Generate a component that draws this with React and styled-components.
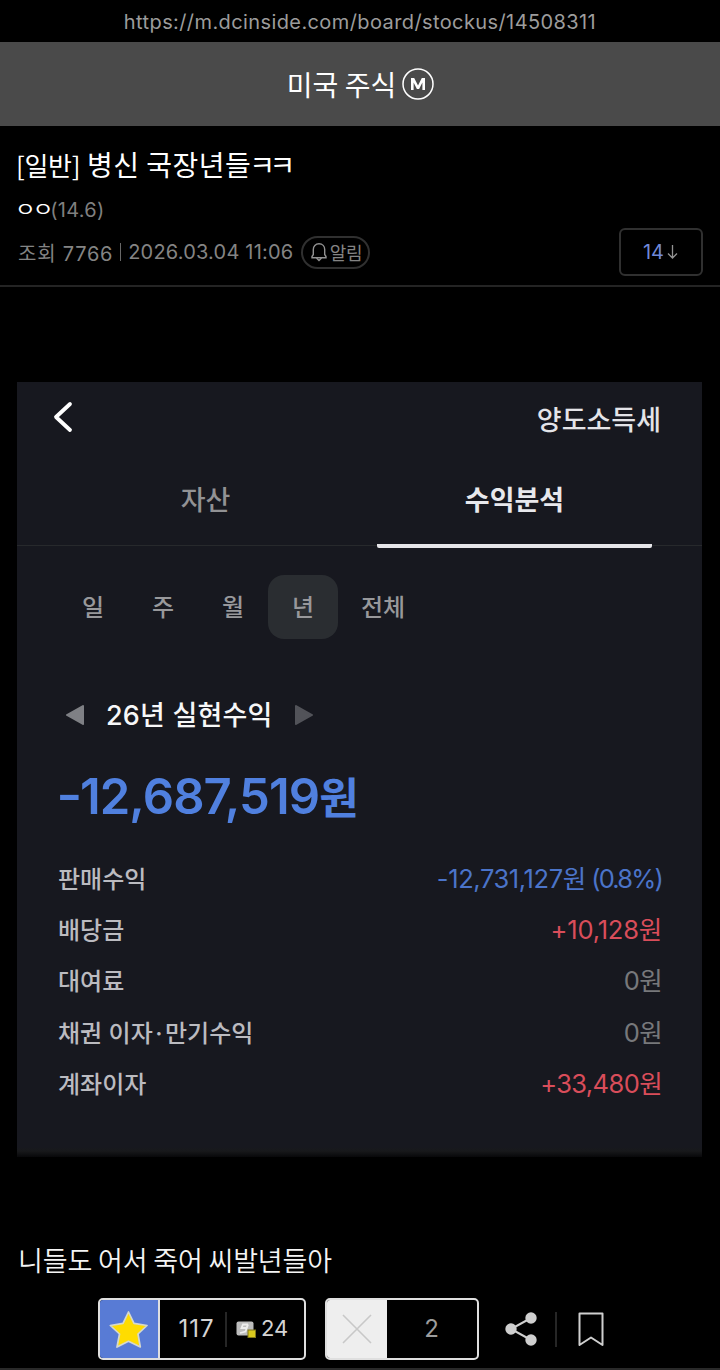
import styled, { createGlobalStyle } from 'styled-components'

const GlobalStyle = createGlobalStyle`
  * {
    box-sizing: border-box;
  }
  body {
    margin: 0;
    background: #000000;
    font-family: Inter, 'Noto Sans CJK KR', sans-serif;
  }
`

const PageStyled = styled.div`
  width: 720px;
  height: 1370px;
  background: #000000;
  display: flex;
  flex-direction: column;
  overflow: hidden;
  white-space: nowrap;
`

const AddressStyled = styled.div`
  height: 42px;
  line-height: 44px;
  text-align: center;
  font-size: 20px;
  font-weight: 400;
  letter-spacing: 0.4px;
  color: #9c9c9c;
`

const BoardHeaderStyled = styled.header`
  height: 84px;
  padding-left: 1px;
  display: flex;
  align-items: center;
  justify-content: center;
  gap: 5px;
  background: #4a4a4a;
  color: #ffffff;
`

const BoardNameStyled = styled.h1`
  margin: 0;
  font-family: 'Noto Sans CJK KR', sans-serif;
  font-size: 28px;
  font-weight: 400;
  line-height: 40px;
`

const PostHeadStyled = styled.section`
  height: 161px;
  padding: 20px 18px 0;
  border-bottom: 2px solid #242424;
`

const PostTitleStyled = styled.h2`
  margin: 0;
  height: 36px;
  line-height: 36px;
  font-family: 'Noto Sans CJK KR', sans-serif;
  font-size: 28px;
  font-weight: 400;
  letter-spacing: 0.5px;
  color: #ffffff;
`

const CategoryStyled = styled.span`
  margin-left: -2px;
  font-size: 26px;
  letter-spacing: -0.3px;
`

const TitleJamoStyled = styled.span`
  margin-left: -2px;
  letter-spacing: -5.6px;
`

const NicknameStyled = styled.span`
  display: inline-block;
  margin: 0 2px 0 -1px;
  transform: scale(1.15, 0.9);
`

const AuthorStyled = styled.div`
  height: 46px;
  line-height: 56px;
  font-size: 20px;
  font-weight: 400;
  letter-spacing: 0.3px;
  color: #7f7f7f;

  ${NicknameStyled} {
    letter-spacing: -2.8px;
    color: #ffffff;
  }
`

const MetaRowStyled = styled.div`
  display: flex;
  justify-content: space-between;
  height: 48px;
`

const MetaStyled = styled.div`
  display: flex;
  align-items: center;
  font-size: 20px;
  font-weight: 400;
  letter-spacing: 0.2px;
  color: #848484;
`

const ViewsStyled = styled.span`
  letter-spacing: 0.75px;
`

const MetaLineStyled = styled.span`
  width: 1px;
  height: 18px;
  margin: 0 7px;
  background: #686868;
`

const AlarmStyled = styled.span`
  display: flex;
  align-items: center;
  justify-content: center;
  gap: 2px;
  width: 69px;
  height: 33px;
  margin-left: 8px;
  border: 2px solid #303030;
  border-radius: 17px;
  font-size: 18px;
  letter-spacing: -0.3px;
`

const CommentCountStyled = styled.div`
  display: flex;
  align-items: center;
  justify-content: center;
  gap: 3px;
  width: 84px;
  height: 48px;
  padding-right: 1px;
  margin-right: -1px;
  border: 2px solid #303030;
  border-radius: 6px;
  font-size: 20px;
  font-weight: 400;
  color: #7089d8;
`

const CardStyled = styled.article`
  width: 685px;
  height: 775px;
  margin: 95px 0 0 17px;
  background: linear-gradient(#17181f 0 765px, #18191b 769px, #08080a 775px);
  color: #e4e4e8;
`

const CardTopStyled = styled.div`
  display: flex;
  align-items: center;
  justify-content: space-between;
  height: 72px;
  padding: 0 41px 0 36px;
  font-size: 27px;
  font-weight: 500;

  svg {
    margin-top: -2px;
  }
`

const TabsStyled = styled.div`
  display: flex;
  height: 92px;
  padding: 0 50px 0 17px;
  border-bottom: 1px solid #27292c;
`

const TabStyled = styled.div`
  width: ${(props) => (props.$active ? '275px' : '343px')};
  height: 94px;
  line-height: 94px;
  text-align: center;
  font-size: 27px;
  font-weight: ${(props) => (props.$active ? 700 : 500)};
  color: ${(props) => (props.$active ? '#e8e8ec' : '#929294')};
  border-bottom: ${(props) => (props.$active ? '4px solid #e6e5e9' : 'none')};
  border-radius: 2px;
`

const PeriodsStyled = styled.div`
  display: flex;
  height: 64px;
  margin: 29px 0 0 41px;
`

const PeriodStyled = styled.div`
  width: ${(props) => (props.$wide ? '90px' : '70px')};
  height: 64px;
  line-height: 65px;
  text-align: center;
  font-size: 24px;
  font-weight: 500;
  color: #98989b;
  border-radius: 16px;
  background: ${(props) => (props.$active ? '#2a2d31' : 'transparent')};
`

const YearRowStyled = styled.div`
  display: flex;
  align-items: center;
  gap: 21px;
  height: 36px;
  margin: 58px 0 0 48px;
  line-height: 36px;
  font-size: 27px;
  font-weight: 500;
  letter-spacing: 0.2px;
  color: #f7f7f8;

  span {
    margin-top: 1px;
  }
`

const TotalStyled = styled.div`
  height: 60px;
  margin: 34px 0 0 41px;
  line-height: 59px;
  font-size: 49px;
  font-weight: 600;
  letter-spacing: -0.9px;
  color: #5080df;
`

const MinusStyled = styled.span`
  display: inline-block;
  transform: scaleX(1.15) translateY(-2px);
`

const WonStyled = styled.span`
  font-size: 43px;
`

const ProfitListStyled = styled.div`
  padding: 26px 40px 0 41px;
`

const ProfitRowStyled = styled.div`
  display: flex;
  justify-content: space-between;
  height: 51.2px;
  line-height: 53px;
  font-size: 24px;
  font-weight: 500;
  color: #bbbbc0;
`

const DotStyled = styled.span`
  margin: 0 2.5px;
`

const AmountStyled = styled.span`
  line-height: 52px;
  font-size: 25.5px;
  font-weight: 400;
  letter-spacing: ${(props) => props.$spacing};
  color: ${(props) => props.$color};
`

const RateStyled = styled.span`
  letter-spacing: -1.8px;
`

const BodyTextStyled = styled.p`
  height: 40px;
  margin: 83px 0 0 18px;
  line-height: 40px;
  font-family: 'Noto Sans CJK KR', sans-serif;
  font-size: 27px;
  font-weight: 350;
  letter-spacing: -0.15px;
  color: #f4f4f4;
`

const ActionsStyled = styled.footer`
  display: flex;
  align-items: center;
  height: 62px;
  margin: 18px 0 8px 98px;
`

const VoteStyled = styled.div`
  display: flex;
  align-items: center;
  width: ${(props) => props.$width};
  height: 62px;
  margin-right: 19px;
  overflow: hidden;
  border: 2px solid #dfdfdf;
  border-radius: 5px;
  font-size: 24px;
  font-weight: 400;
  line-height: 28px;
  color: #d4d4d4;
`

const VoteIconStyled = styled.div`
  display: flex;
  align-items: center;
  justify-content: center;
  flex: none;
  width: 60px;
  height: 58px;
  background: ${(props) => props.$color};
  border-right: ${(props) => (props.$line ? '2px solid #dfdfdf' : 'none')};
`

const VoteCountStyled = styled.span`
  width: ${(props) => props.$width};
  padding: 0 0 1px ${(props) => props.$shift || 0};
  text-align: center;
  letter-spacing: 1px;
  color: ${(props) => props.$color};
`

const DividerStyled = styled.span`
  width: 2px;
  height: 35px;
  background: #262626;
`

const FixedVoteStyled = styled.span`
  display: flex;
  align-items: center;
  gap: 5px;
  margin-left: 9px;
  font-size: 22px;

  span {
    padding-bottom: 2px;
  }
`

const SideActionsStyled = styled.div`
  display: flex;
  align-items: center;
  gap: 18px;
  margin-left: 7px;

  ${DividerStyled} {
    margin-right: 3px;
  }
`

const BottomLineStyled = styled.div`
  height: 2px;
  background: #292929;
`

const profits = [
  { label: '판매수익', amount: '-12,731,127원', rate: '(0.8%)', color: '#4b74c9', spacing: '-0.4px' },
  { label: '배당금', amount: '+10,128원', color: '#d94d5a', spacing: '-0.2px' },
  { label: '대여료', amount: '0원', color: '#77787b', spacing: '-0.6px' },
  {
    label: (
      <span>
        채권 이자<DotStyled>·</DotStyled>만기수익
      </span>
    ),
    amount: '0원',
    color: '#77787b',
    spacing: '-0.6px',
  },
  { label: '계좌이자', amount: '+33,480원', color: '#d94d5a', spacing: '-0.6px' },
]

const periods = ['일', '주', '월', '년', '전체']

function MinorBadge() {
  return (
    <svg width="33" height="33" viewBox="0 0 33 33" fill="none">
      <circle cx="17" cy="16" r="15" stroke="#fff" strokeWidth="1.5" />
      <path d="M10 22V10H13.2L17 17.5L20.8 10H24V22H21.4V14.5L18.1 21H15.9L12.6 14.5V22Z" fill="#fff" />
    </svg>
  )
}

function BellIcon() {
  return (
    <svg width="18" height="20" viewBox="0 0 18 20" fill="none" stroke="#929292" strokeWidth="1.4">
      <path d="M2 15.8V14.5L3.3 12.5V7.5C3.3 4.2 5.5 1.8 9 1.8S14.7 4.2 14.7 7.5V12.5L16 14.5V15.8Z" />
      <path d="M6.5 16L9 18.5L11.5 16" />
    </svg>
  )
}

function DownIcon() {
  return (
    <svg width="11" height="16" viewBox="0 0 11 16" fill="none" stroke="#929292" strokeWidth="1.3">
      <path d="M5.5 1V14M1 9.5L5.5 14L10 9.5" />
    </svg>
  )
}

function BackIcon() {
  return (
    <svg width="20" height="32" viewBox="0 0 20 32" fill="none">
      <path d="M17 3L3 16L17 29" stroke="#fff" strokeWidth="3.8" strokeLinecap="round" strokeLinejoin="round" />
    </svg>
  )
}

function Arrow({ next }) {
  const color = next ? '#525359' : '#7f8085'
  return (
    <svg width="20" height="22" viewBox="0 0 20 22">
      <path
        d={next ? 'M2 2L18 11L2 20Z' : 'M18 2L2 11L18 20Z'}
        fill={color}
        stroke={color}
        strokeWidth="2"
        strokeLinejoin="round"
      />
    </svg>
  )
}

function StarIcon() {
  return (
    <svg width="42" height="40" viewBox="0 0 42 40">
      <path
        d="M20.5 3L26 14.3L39 16.5L30 25L32.3 38L20.5 32.3L9 38L11.5 25L2.3 16.5L15 14.3Z"
        fill="#ffdc00"
        stroke="#d4d8cd"
        strokeWidth="1.7"
        strokeLinejoin="round"
      />
    </svg>
  )
}

function FixedIcon() {
  return (
    <svg width="20" height="17" viewBox="0 0 20 17">
      <rect x="0.5" y="0.5" width="17" height="14" rx="2" fill="#bdbdbd" />
      <path d="M12 3.5H7L5.5 7H10.5L12 3.5L9.5 10.5L4 12" stroke="#eeeeee" strokeWidth="1.8" fill="none" />
      <rect x="12" y="9" width="7.5" height="7.5" fill="#d9c91e" stroke="#807719" />
    </svg>
  )
}

function ShareIcon() {
  return (
    <svg width="32" height="34" viewBox="0 0 32 34" fill="#cfcfcf">
      <path d="M26 6L6 17L26 28" fill="none" stroke="#cfcfcf" strokeWidth="2" />
      <circle cx="26" cy="6" r="5.7" />
      <circle cx="6" cy="17" r="5.7" />
      <circle cx="26" cy="28" r="5.7" />
    </svg>
  )
}

function App() {
  return (
    <PageStyled>
      <GlobalStyle />
      <AddressStyled>https://m.dcinside.com/board/stockus/14508311</AddressStyled>
      <BoardHeaderStyled>
        <BoardNameStyled>미국 주식</BoardNameStyled>
        <MinorBadge />
      </BoardHeaderStyled>

      <PostHeadStyled>
        <PostTitleStyled>
          <CategoryStyled>[일반]</CategoryStyled> 병신 국장년들
          <TitleJamoStyled>ㅋㅋ</TitleJamoStyled>
        </PostTitleStyled>
        <AuthorStyled>
          <NicknameStyled>ㅇㅇ</NicknameStyled>(14.6)
        </AuthorStyled>
        <MetaRowStyled>
          <MetaStyled>
            <ViewsStyled>조회 7766</ViewsStyled>
            <MetaLineStyled />
            2026.03.04 11:06
            <AlarmStyled>
              <BellIcon />
              알림
            </AlarmStyled>
          </MetaStyled>
          <CommentCountStyled>
            14
            <DownIcon />
          </CommentCountStyled>
        </MetaRowStyled>
      </PostHeadStyled>

      <CardStyled>
        <CardTopStyled>
          <BackIcon />
          양도소득세
        </CardTopStyled>
        <TabsStyled>
          <TabStyled>자산</TabStyled>
          <TabStyled $active>수익분석</TabStyled>
        </TabsStyled>
        <PeriodsStyled>
          {periods.map((period) => (
            <PeriodStyled key={period} $active={period === '년'} $wide={period.length > 1}>
              {period}
            </PeriodStyled>
          ))}
        </PeriodsStyled>
        <YearRowStyled>
          <Arrow />
          <span>26년 실현수익</span>
          <Arrow next />
        </YearRowStyled>
        <TotalStyled>
          <MinusStyled>-</MinusStyled>12,687,519<WonStyled>원</WonStyled>
        </TotalStyled>
        <ProfitListStyled>
          {profits.map(({ label, amount, rate, color, spacing }, index) => (
            <ProfitRowStyled key={index}>
              {label}
              <AmountStyled $color={color} $spacing={spacing}>
                {amount}
                {rate && <RateStyled> {rate}</RateStyled>}
              </AmountStyled>
            </ProfitRowStyled>
          ))}
        </ProfitListStyled>
      </CardStyled>

      <BodyTextStyled>니들도 어서 죽어 씨발년들아</BodyTextStyled>

      <ActionsStyled>
        <VoteStyled $width="208px">
          <VoteIconStyled $color="#587bd5" $line>
            <StarIcon />
          </VoteIconStyled>
          <VoteCountStyled $width="65px" $shift="8px" $color="#d4d4d4">
            117
          </VoteCountStyled>
          <DividerStyled />
          <FixedVoteStyled>
            <FixedIcon />
            <span>24</span>
          </FixedVoteStyled>
        </VoteStyled>
        <VoteStyled $width="154px">
          <VoteIconStyled $color="#eeeeee">
            <svg width="32" height="32" viewBox="0 0 32 32" stroke="#c8c8c8" strokeWidth="1.6">
              <path d="M2 2L30 30M30 2L2 30" />
            </svg>
          </VoteIconStyled>
          <VoteCountStyled $width="91px" $color="#9c9c9c">
            2
          </VoteCountStyled>
        </VoteStyled>
        <SideActionsStyled>
          <ShareIcon />
          <DividerStyled />
          <svg width="26" height="35" viewBox="0 0 26 35" fill="none" stroke="#cfcfcf" strokeWidth="2">
            <path d="M1.5 1.5H24.5V33L13 25.5L1.5 33Z" strokeLinejoin="round" />
          </svg>
        </SideActionsStyled>
      </ActionsStyled>
      <BottomLineStyled />
    </PageStyled>
  )
}

export default App
